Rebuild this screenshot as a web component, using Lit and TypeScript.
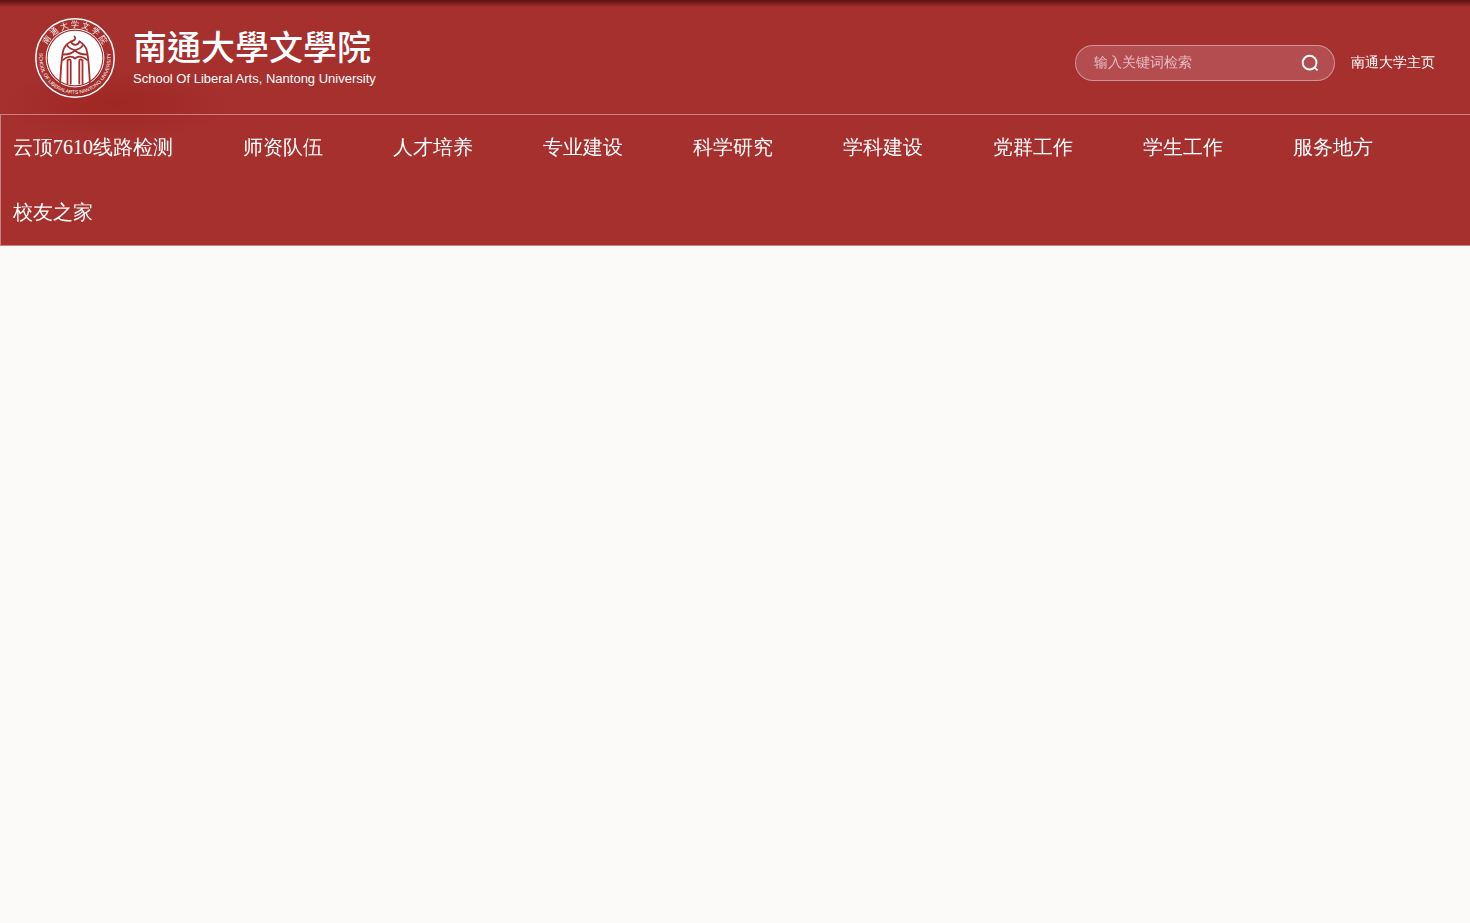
import { LitElement, html, css } from "lit";
import { customElement } from "lit/decorators.js";

@customElement("school-emblem")
class SchoolEmblem extends LitElement {
  static styles = css`
    :host {
      display: block;
      flex: none;
    }
    .emblem {
      display: block;
      width: 80px;
      height: 80px;
    }
    .ring {
      fill: #fff;
      font-family: "Liberation Sans", "WenQuanYi Zen Hei", "Noto Sans CJK SC", sans-serif;
      text-anchor: middle;
    }
    .ring-cn {
      font-size: 8px;
    }
    .ring-en {
      font-size: 5px;
    }
  `;

  render() {
    return html`
      <svg class="emblem" viewBox="0 0 80 80" role="img" aria-label="南通大学文学院">
        <defs>
          <path id="upper" d="M9 40a31 31 0 0 1 62 0" />
          <path id="lower" d="M4.7 34a35.8 35.8 0 1 0 70.6 0" />
        </defs>
        <circle cx="40" cy="40" r="39.2" fill="none" stroke="#fff" stroke-width="1.5" />
        <circle cx="40" cy="40" r="28.9" fill="none" stroke="#fff" stroke-width="1" />
        <circle cx="40" cy="40" r="27.3" fill="#fff" />
        <text class="ring ring-cn">
          <textPath href="#upper" startOffset="50%">南 通 大 学 文 学 院</textPath>
        </text>
        <text class="ring ring-en">
          <textPath href="#lower" startOffset="50%">SCHOOL OF LIBERALARTS NANTONG UNIVERSITY</textPath>
        </text>
        <g fill="none" stroke="#a5302e" stroke-width="1.8" stroke-linecap="round">
          <path d="M25 65.5C26 54 26 40 28.500 31.500C30 27.500 33 25 36 23.500" />
          <path d="M55 65.500C54 54 54 40 51.500 31.500C50 27.500 47 25 44.500 23.500" />
          <path d="M39.500 18.500C41.500 21 39.500 22.500 36 23.500C37.500 28 43 28 44.500 23.500" />
          <path d="M32 27C33.500 30.500 37 31 40 32.500C43 31 46.500 30.500 48 27" />
          <path d="M28.500 36.500C33.500 36.500 37.500 35 40 32.500C42.500 35 46.500 36.500 51.500 36.500" />
          <path d="M28 42C31 38.500 37 37.500 40 40.500C43 37.500 49 38.500 52 42" />
          <path d="M35.700 65.500V43C35.700 41 34 41 32.500 42.500V65.500" />
          <path d="M44.300 65.500V43C44.300 41 46 41 47.500 42.500V65.500" />
        </g>
      </svg>
    `;
  }
}

@customElement("site-search")
class SiteSearch extends LitElement {
  static styles = css`
    :host {
      display: block;
    }
    .search {
      display: flex;
      align-items: center;
      box-sizing: border-box;
      width: 260px;
      height: 36px;
      padding: 0 15px 0 18px;
      border: 1px solid rgba(255, 255, 255, 0.4);
      border-radius: 18px;
      background: #b34d50;
    }
    .field {
      flex: 1;
      min-width: 0;
      padding: 0;
      border: 0;
      outline: 0;
      background: none;
      color: #fff;
      font: 14px/20px "Liberation Serif", "WenQuanYi Zen Hei", "Noto Sans CJK SC", sans-serif;
    }
    .field::placeholder {
      color: #e8bcc6;
      opacity: 1;
    }
    .submit {
      display: flex;
      padding: 0;
      border: 0;
      background: none;
      color: #fff;
      cursor: pointer;
    }
    .glass {
      width: 18px;
      height: 18px;
    }
  `;

  render() {
    return html`
      <form class="search" role="search" @submit=${(e: Event) => e.preventDefault()}>
        <input class="field" type="text" aria-label="输入关键词检索" placeholder="输入关键词检索" />
        <button class="submit" type="submit" aria-label="搜索">
          <svg class="glass" viewBox="0 0 18 18" fill="none" stroke="currentColor" stroke-width="1.900">
            <circle cx="8.600" cy="8.600" r="6.900" />
            <path d="M13.400 13.400L16.600 16.400" />
          </svg>
        </button>
      </form>
    `;
  }
}

@customElement("app-root")
class AppRoot extends LitElement {
  static styles = css`
    :host {
      display: block;
      min-height: 100vh;
      background: #fcfaf8;
      color: #fff;
      font-family: "Liberation Serif", "WenQuanYi Zen Hei", "Noto Sans CJK SC", sans-serif;
    }
    a {
      color: inherit;
      text-decoration: none;
    }
    .header {
      background:
        linear-gradient(rgba(50, 0, 0, 0.65), rgba(80, 0, 0, 0) 7px),
        radial-gradient(ellipse 120px 36px at 115px 104px, rgba(155, 33, 29, 0.6), rgba(155, 33, 29, 0)),
        #a5302e;
    }
    .top {
      display: flex;
      align-items: center;
      justify-content: space-between;
      padding: 18px 35px 16px;
    }
    .brand {
      display: flex;
      align-items: center;
      gap: 18px;
    }
    .names {
      display: flex;
      flex-direction: column;
      gap: 5px;
      padding-bottom: 4px;
      white-space: nowrap;
    }
    .name {
      font: 500 34px/40px "Kaiti SC", KaiTi, STKaiti, "Noto Sans CJK TC", sans-serif;
    }
    .name-en {
      font: 13px/16px "Liberation Sans", sans-serif;
    }
    .tools {
      display: flex;
      align-items: center;
      gap: 16px;
      padding-top: 10px;
      font-size: 14px;
      line-height: 20px;
    }
    .menu {
      display: flex;
      flex-wrap: wrap;
      column-gap: 70px;
      margin: 0;
      padding: 0 12px;
      border: solid rgba(255, 255, 255, 0.4);
      border-width: 1px 0 1px 1px;
      list-style: none;
      font-size: 20px;
      line-height: 65px;
    }
    .item {
      display: block;
      height: 65px;
    }
  `;

  private items = [
    "云顶7610线路检测",
    "师资队伍",
    "人才培养",
    "专业建设",
    "科学研究",
    "学科建设",
    "党群工作",
    "学生工作",
    "服务地方",
    "校友之家",
  ];

  render() {
    return html`
      <header class="header">
        <div class="top">
          <a class="brand" href="#">
            <school-emblem></school-emblem>
            <span class="names">
              <span class="name" lang="zh-Hant">南通大學文學院</span>
              <span class="name-en" lang="en">School Of Liberal Arts, Nantong University</span>
            </span>
          </a>
          <div class="tools">
            <site-search></site-search>
            <a href="#">南通大学主页</a>
          </div>
        </div>
        <nav>
          <ul class="menu">
            ${this.items.map((text) => html`<li><a class="item" href="#">${text}</a></li>`)}
          </ul>
        </nav>
      </header>
    `;
  }
}
